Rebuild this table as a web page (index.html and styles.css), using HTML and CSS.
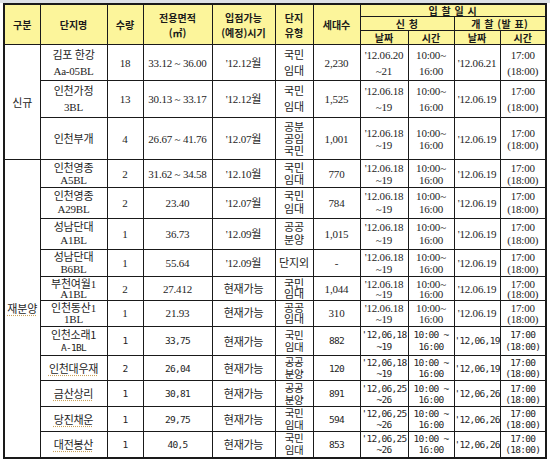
FILE: index.html
```html
<!DOCTYPE html>
<html lang="ko">
<head>
<meta charset="utf-8">
<title>입찰 일정</title>
<link rel="stylesheet" href="styles.css">
</head>
<body>
<div class="sheet-top"></div>
<table class="bid">
  <colgroup>
    <col class="c1"><col class="c2"><col class="c3"><col class="c4"><col class="c5"><col class="c6">
    <col class="c7"><col class="c8"><col class="c9"><col class="c10"><col class="c11">
  </colgroup>
  <thead>
    <tr class="h1">
      <th rowspan="3" class="span">구분</th>
      <th rowspan="3" class="span">단지명</th>
      <th rowspan="3" class="span">수량</th>
      <th rowspan="3" class="span">전용면적<br>(㎡)</th>
      <th rowspan="3" class="span">입점가능<br>(예정)시기</th>
      <th rowspan="3" class="span">단지<br>유형</th>
      <th rowspan="3" class="span">세대수</th>
      <th colspan="4" class="wide">입 찰 일 시</th>
    </tr>
    <tr class="h2">
      <th colspan="2" class="wide">신 청</th>
      <th colspan="2" class="wide">개 찰 (발 표)</th>
    </tr>
    <tr class="h3">
      <th>날짜</th><th>시간</th><th>날짜</th><th>시간</th>
    </tr>
  </thead>
  <tbody>
    <tr class="r36">
      <td rowspan="3" class="grp">신규</td>
      <td>김포 한강<br>Aa-05BL</td><td>18</td><td>33.12 ~ 36.00</td><td>'12.12월</td>
      <td>국민<br>임대</td><td>2,230</td><td>'12.06.20<br>~21</td><td>10:00~<br>16:00</td><td>'12.06.21</td><td>17:00<br>(18:00)</td>
    </tr>
    <tr class="r37">
      <td>인천가정<br>3BL</td><td>13</td><td>30.13 ~ 33.17</td><td>'12.12월</td>
      <td>국민<br>임대</td><td>1,525</td><td>'12.06.18<br>~19</td><td>10:00~<br>16:00</td><td>'12.06.19</td><td>17:00<br>(18:00)</td>
    </tr>
    <tr class="r42">
      <td>인천부개</td><td>4</td><td>26.67 ~ 41.76</td><td>'12.07월</td>
      <td>공분<br>공임<br>국민</td><td>1,001</td><td>'12.06.18<br>~19</td><td>10:00~<br>16:00</td><td>'12.06.19</td><td>17:00<br>(18:00)</td>
    </tr>
    <tr class="r28">
      <td rowspan="11" class="grp"><span class="mark">재분양</span></td>
      <td>인천영종<br>A5BL</td><td>2</td><td>31.62 ~ 34.58</td><td>'12.10월</td>
      <td>국민<br>임대</td><td>770</td><td>'12.06.18<br>~19</td><td>10:00~<br>16:00</td><td>'12.06.19</td><td>17:00<br>(18:00)</td>
    </tr>
    <tr class="r31">
      <td>인천영종<br>A29BL</td><td>2</td><td>23.40</td><td>'12.07월</td>
      <td>국민<br>임대</td><td>784</td><td>'12.06.18<br>~19</td><td>10:00~<br>16:00</td><td>'12.06.19</td><td>17:00<br>(18:00)</td>
    </tr>
    <tr class="r31">
      <td>성남단대<br>A1BL</td><td>1</td><td>36.73</td><td>'12.09월</td>
      <td>공공<br>분양</td><td>1,015</td><td>'12.06.18<br>~19</td><td>10:00~<br>16:00</td><td>'12.06.19</td><td>17:00<br>(18:00)</td>
    </tr>
    <tr class="r27">
      <td>성남단대<br>B6BL</td><td>1</td><td>55.64</td><td>'12.09월</td>
      <td>단지외</td><td>-</td><td>'12.06.18<br>~19</td><td>10:00~<br>16:00</td><td>'12.06.19</td><td>17:00<br>(18:00)</td>
    </tr>
    <tr class="r24">
      <td>부천여월1<br>A1BL</td><td>2</td><td>27.412</td><td>현재가능</td>
      <td>국민<br>임대</td><td>1,044</td><td>'12.06.18<br>~19</td><td>10:00~<br>16:00</td><td>'12.06.19</td><td>17:00<br>(18:00)</td>
    </tr>
    <tr class="r26">
      <td>인천동산1<br>1BL</td><td>1</td><td>21.93</td><td>현재가능</td>
      <td>공공<br>임대</td><td>310</td><td>'12.06.18<br>~19</td><td>10:00~<br>16:00</td><td>'12.06.19</td><td>17:00<br>(18:00)</td>
    </tr>
    <tr class="r29 mono">
      <td><span class="ko">인천소래1</span><br>A-1BL</td><td>1</td><td>33,75</td><td class="ko">현재가능</td>
      <td class="ko two">국민<br>임대</td><td>882</td><td>'12,06,18<br>~19</td><td>10:00 ~<br>16:00</td><td>'12,06,19</td><td>17:00<br>(18:00)</td>
    </tr>
    <tr class="r25 mono">
      <td class="ko"><span class="mark">인천대우재</span></td><td>2</td><td>26,04</td><td class="ko">현재가능</td>
      <td class="ko two">공공<br>분양</td><td>120</td><td>'12,06,18<br>~19</td><td>10:00 ~<br>16:00</td><td>'12,06,19</td><td>17:00<br>(18:00)</td>
    </tr>
    <tr class="r26 mono">
      <td class="ko"><span class="mark">금산상리</span></td><td>1</td><td>30,81</td><td class="ko">현재가능</td>
      <td class="ko two">공공<br>분양</td><td>891</td><td>'12,06,25<br>~26</td><td>10:00 ~<br>16:00</td><td>'12,06,26</td><td>17:00<br>(18:00)</td>
    </tr>
    <tr class="r25 mono">
      <td class="ko"><span class="mark">당진채운</span></td><td>1</td><td>29,75</td><td class="ko">현재가능</td>
      <td class="ko two">국민<br>임대</td><td>594</td><td>'12,06,25<br>~26</td><td>10:00 ~<br>16:00</td><td>'12,06,26</td><td>17:00<br>(18:00)</td>
    </tr>
    <tr class="r26 mono">
      <td class="ko"><span class="mark">대전봉산</span></td><td>1</td><td>40,5</td><td class="ko">현재가능</td>
      <td class="ko two">국민<br>임대</td><td>853</td><td>'12,06,25<br>~26</td><td>10:00 ~<br>16:00</td><td>'12,06,26</td><td>17:00<br>(18:00)</td>
    </tr>
  </tbody>
</table>
</body>
</html>
```
FILE: styles.css
```css
html, body {
  margin: 0;
  padding: 0;
  background: #ffffff;
}
body {
  width: 550px;
  height: 463px;
  overflow: hidden;
  font-family: "Liberation Serif", "Noto Sans CJK KR", serif;
  color: #1e1e1e;
}
.sheet-top {
  height: 3px;
  background: #dde1e6;
}
.bid {
  border-collapse: collapse;
  table-layout: fixed;
  margin-left: 3px;
  width: 543px;
  border: 2px solid #1a1a1a;
}
.bid col.c1 { width: 36px; }
.bid col.c2 { width: 67px; }
.bid col.c3 { width: 36px; }
.bid col.c4 { width: 69px; }
.bid col.c5 { width: 63px; }
.bid col.c6 { width: 38px; }
.bid col.c7 { width: 47px; }
.bid col.c8 { width: 48px; }
.bid col.c9 { width: 46px; }
.bid col.c10 { width: 46px; }
.bid col.c11 { width: 46px; }

.bid th, .bid td {
  border: 1px solid #1a1a1a;
  padding: 0;
  text-align: center;
  vertical-align: middle;
  overflow: hidden;
  white-space: nowrap;
}
.bid th {
  background: #fcf59b;
  font-family: "Noto Sans CJK KR", sans-serif;
  font-weight: 700;
  font-size: 10px;
  line-height: 12px;
  color: #1a1a1a;
}
.bid th.span { line-height: 15px; }
.bid th.wide { letter-spacing: 0.5px; }
.bid tr.h1 { height: 12px; }
.bid tr.h2 { height: 14px; }
.bid tr.h3 { height: 14px; }
.bid tr.h1 th.wide { line-height: 11px; }
.bid tr.h2 th, .bid tr.h3 th { line-height: 12px; }

.bid td {
  font-size: 11px;
  line-height: 12px;
  letter-spacing: -0.2px;
}
.bid td.grp {
  font-family: "Noto Sans CJK KR", sans-serif;
  font-size: 11px;
  line-height: 14px;
}
.bid tr.mono td {
  font-family: "DejaVu Sans Mono", "Noto Sans CJK KR", monospace;
  font-size: 9.5px;
  letter-spacing: -0.7px;
}
.bid tr.mono .ko {
  font-family: "Noto Sans CJK KR", sans-serif;
  font-size: 11px;
  letter-spacing: -0.3px;
}
.bid tr.mono td.two {
  font-size: 10.5px;
  line-height: 12px;
}
.mark {
  text-decoration: underline dotted #c9a25a;
  text-underline-offset: 2px;
}

.bid tr.r36 { height: 36px; }
.bid tr.r36 td { line-height: 16px; }
.bid tr.r37 { height: 37px; }
.bid tr.r37 td { line-height: 16px; }
.bid tr.r42 { height: 42px; }
.bid tr.r42 td { line-height: 12px; }
.bid tr.r28 { height: 28px; }
.bid tr.r28 td { line-height: 12px; }
.bid tr.r31 { height: 31px; }
.bid tr.r31 td { line-height: 13px; }
.bid tr.r27 { height: 27px; }
.bid tr.r27 td { line-height: 12px; }
.bid tr.r24 { height: 24px; }
.bid tr.r24 td { line-height: 10px; }
.bid tr.r26 { height: 26px; }
.bid tr.r26 td { line-height: 11px; }
.bid tr.r29 { height: 29px; }
.bid tr.r29 td { line-height: 12px; }
.bid tr.r25 { height: 25px; }
.bid tr.r25 td { line-height: 11px; }
.bid tr td.grp { line-height: 14px; }
.bid tr.mono td.two { line-height: 12px; }
```
